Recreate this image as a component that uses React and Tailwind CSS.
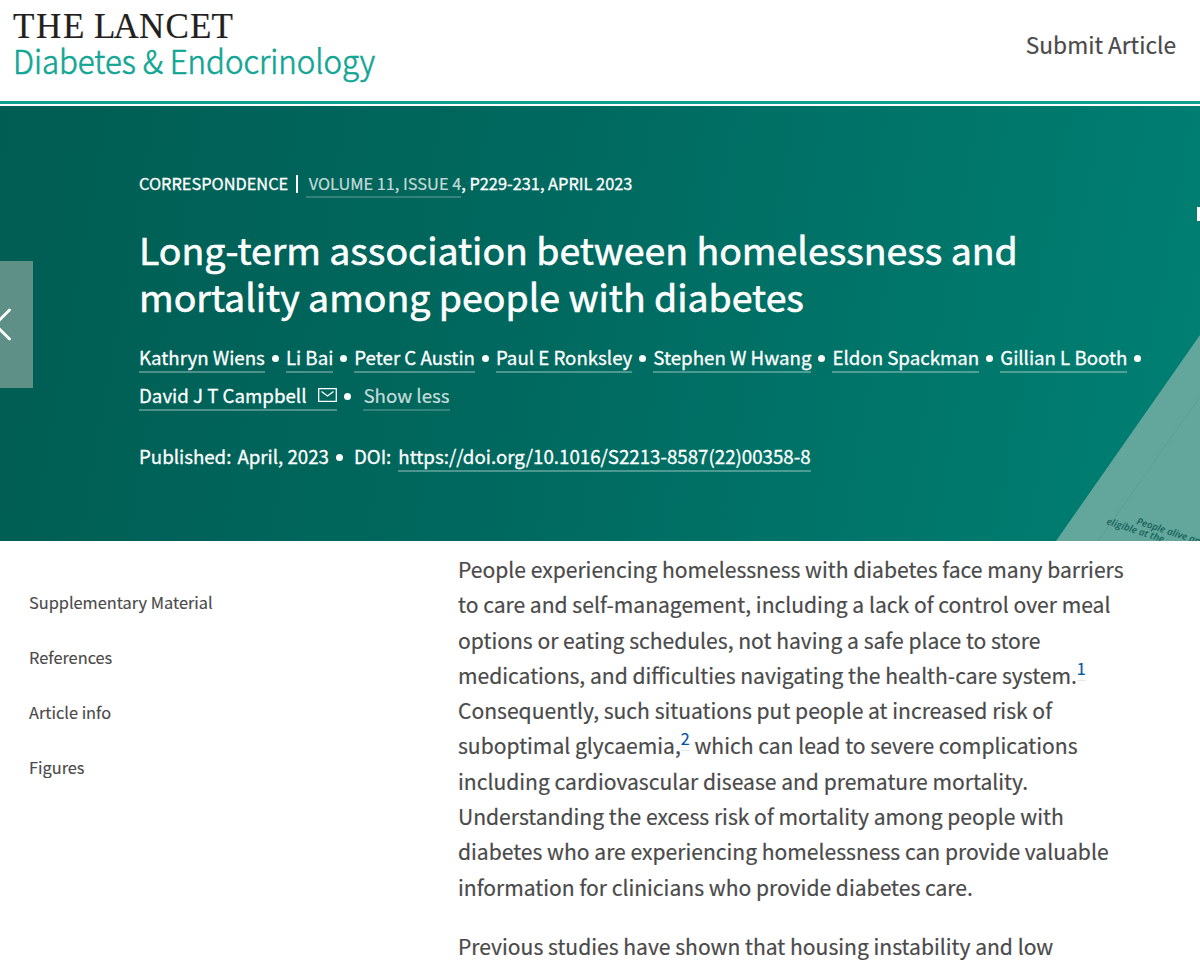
import React from 'react';

const authors = [
  'Kathryn Wiens',
  'Li Bai',
  'Peter C Austin',
  'Paul E Ronksley',
  'Stephen W Hwang',
  'Eldon Spackman',
  'Gillian L Booth',
];

const sections = ['Supplementary Material', 'References', 'Article info', 'Figures'];

const Logo = () => (
  <svg width="400" height="98" viewBox="0 0 400 98" className="block">
    <text x="13 36 63 85 94 113.500 139 165.500 190 211.500" y="38" fontSize="35" fill="#231f20" stroke="#231f20" strokeWidth="0.2" fontFamily="'Liberation Serif', serif">
      THE LANCET
    </text>
    <text x="13" y="74" textLength="362" lengthAdjust="spacingAndGlyphs" fontSize="33" fontWeight="300" fill="#10a594" stroke="#10a594" strokeWidth="0.65" fontFamily="'Noto Sans CJK SC', sans-serif">
      Diabetes &amp; Endocrinology
    </text>
  </svg>
);

const Dot = ({ className = '' }) => (
  <span className={`relative top-px inline-block size-[7px] shrink-0 rounded-full bg-white ${className}`} />
);

const Ref = ({ children }) => (
  <a href="#refs" className="relative -top-[9px] border-b border-gray-200 text-[16px] leading-none text-[#0055a5]">{children}</a>
);

const Header = () => (
  <header className="flex h-[106px] flex-col justify-between bg-white">
    <div className="flex h-[98px] justify-between">
      <Logo />
      <a href="#submit" className="mr-[24px] pt-[28px] text-[22.700px] leading-[34px] text-[#4a4a4a] [-webkit-text-stroke:0.2px]">Submit Article</a>
    </div>
    <div className="mb-[2px] h-[3px] bg-[#0da090]" />
  </header>
);

const Hero = () => (
  <section className="relative h-[435px] overflow-hidden bg-linear-[100deg,#005d53_0%,#00695f_45%,#008073_100%] pl-[139px] text-white [-webkit-text-stroke:0.3px]">
    {/* faded figure preview behind the heading */}
    <svg className="absolute top-0 right-0" width="150" height="435" viewBox="1050 106 150 435">
      <path d="M1056 541 L1200 335 V541 Z" fill="#63a69b" />
      <path d="M1098 541 L1200 397" stroke="#5b9f94" strokeWidth="1" />
      <g fill="#14635a" stroke="none" fontSize="9.6" fontStyle="italic" fontWeight="600" fontFamily="'Open Sans', sans-serif">
        <text x="1136" y="524" transform="rotate(18 1136 524)">People alive an</text>
        <text x="1106" y="524" transform="rotate(18 1106 524)">eligible at the</text>
      </g>
      <rect x="1197" y="207" width="3" height="14" fill="#fff" />
    </svg>
    <button className="absolute top-[155px] left-0 h-[127px] w-[33px] bg-[#5f9088]" aria-label="Previous">
      <svg width="33" height="127" viewBox="0 0 33 127" fill="none" stroke="#fff" strokeWidth="2.8" strokeLinecap="round">
        <path d="M9.500 49 L-5 63.500 L9.500 78" />
      </svg>
    </button>

    <div className="relative whitespace-nowrap">
      <div className="flex pt-[64px] text-[16.350px] leading-[26px]">
        <span>CORRESPONDENCE</span>
        <span className="mt-[5px] ml-[8px] h-[18px] w-[1.500px] bg-white" />
        <a href="#issue" className="ml-[8px] border-b-2 border-white/20 pl-[3px] text-white/75 [-webkit-text-stroke:0.2px]">VOLUME 11, ISSUE 4</a>
        <span>, P229-231, APRIL 2023</span>
      </div>
      <h1 className="mt-[28px] text-[37.450px] leading-[47px] [-webkit-text-stroke:0.6px]">
        Long-term association between homelessness and
        <br />
        mortality among people with diabetes
      </h1>
      <div className="mt-[22px] flex text-[18.700px] leading-[29px]">
        {authors.map((name) => (
          <span key={name} className="flex items-center">
            <a href="#author" className="border-b-2 border-white/30">{name}</a>
            <Dot className="mx-[7px]" />
          </span>
        ))}
      </div>
      <div className="mt-[7px] flex items-center text-[18.700px] leading-[29px]">
        <a href="#author" className="flex items-center border-b-2 border-white/30">
          David J T Campbell
          <svg className="ml-[12px]" width="19" height="14" viewBox="0 0 19 14" fill="none" stroke="#fff" strokeWidth="1.3">
            <path d="M.7 .7 H18.300 V13.300 H.7 Z M3.500 3.500 L9.500 8 L15.500 3.500" />
          </svg>
        </a>
        <Dot className="mx-[7px]" />
        <a href="#less" className="ml-[5px] border-b-2 border-white/20 text-white/75 [-webkit-text-stroke:0.2px]">Show less</a>
      </div>
      <div className="mt-[29px] flex items-center text-[18.700px] leading-[28px]">
        <span>Published:</span>
        <span className="ml-[6px]">April, 2023</span>
        <Dot className="ml-[7px]" />
        <span className="ml-[11px]">DOI:</span>
        <a href="#doi" className="ml-[7px] border-b-2 border-white/30 pt-[2px]">https://doi.org/10.1016/S2213-8587(22)00358-8</a>
      </div>
    </div>
  </section>
);

const App = () => {
  return (
    <div className="h-[963px] w-[1200px] overflow-hidden bg-white font-['Noto_Sans_CJK_SC',sans-serif]">
      <Header />
      <Hero />
      <main className="flex">
        <nav className="flex w-[458px] shrink-0 flex-col gap-[31px] pt-[49px] pl-[29px] text-[16.350px] leading-[24px] text-[#4a4a4a] [-webkit-text-stroke:0.15px]">
          {sections.map((s) => (
            <a key={s} href="#section">{s}</a>
          ))}
        </nav>
        <article className="pt-[11px] text-[21.080px] leading-[35.300px] whitespace-nowrap text-[#4a4a4a] [-webkit-text-stroke:0.2px]">
          <p>
            People experiencing homelessness with diabetes face many barriers<br />
            to care and self-management, including a lack of control over meal<br />
            options or eating schedules, not having a safe place to store<br />
            medications, and difficulties navigating the health-care system.<Ref>1</Ref><br />
            Consequently, such situations put people at increased risk of<br />
            suboptimal glycaemia,<Ref>2</Ref> which can lead to severe complications<br />
            including cardiovascular disease and premature mortality.<br />
            Understanding the excess risk of mortality among people with<br />
            diabetes who are experiencing homelessness can provide valuable<br />
            information for clinicians who provide diabetes care.
          </p>
          <p className="mt-[24px]">Previous studies have shown that housing instability and low</p>
        </article>
      </main>
    </div>
  );
};

export default App;
